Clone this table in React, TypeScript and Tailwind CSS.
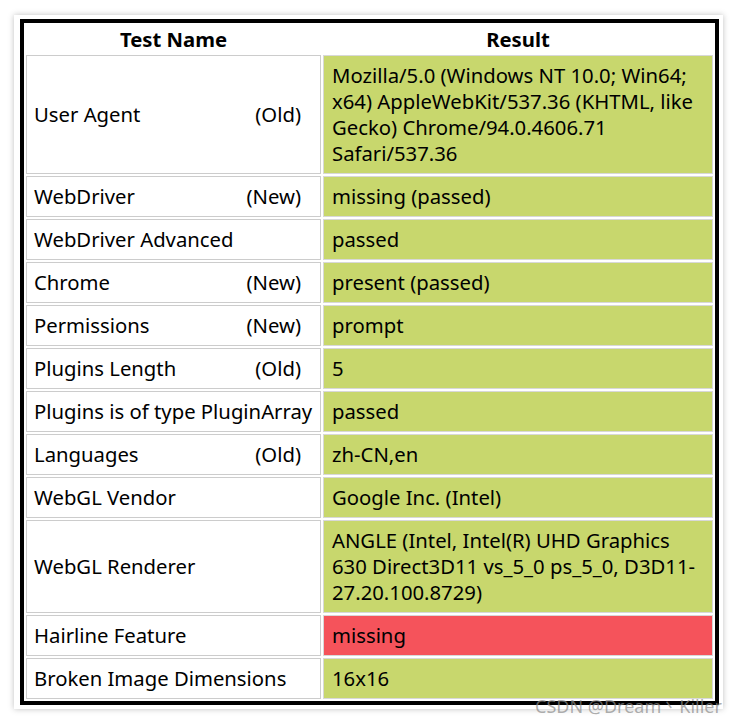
import React from "react";

type Row = { label: string; tag?: string; value: React.ReactNode; bad?: boolean };

const rows: Row[] = [
  {
    label: "User Agent",
    tag: "(Old)",
    value: (
      <>
        Mozilla/5.0 (Windows NT 10.0; Win64;
        <br />
        x64) AppleWebKit/537.36 (KHTML, like
        <br />
        Gecko) Chrome/94.0.4606.71
        <br />
        Safari/537.36
      </>
    ),
  },
  { label: "WebDriver", tag: "(New)", value: "missing (passed)" },
  { label: "WebDriver Advanced", value: "passed" },
  { label: "Chrome", tag: "(New)", value: "present (passed)" },
  { label: "Permissions", tag: "(New)", value: "prompt" },
  { label: "Plugins Length", tag: "(Old)", value: "5" },
  { label: "Plugins is of type PluginArray", value: "passed" },
  { label: "Languages", tag: "(Old)", value: "zh-CN,en" },
  { label: "WebGL Vendor", value: "Google Inc. (Intel)" },
  {
    label: "WebGL Renderer",
    value: (
      <>
        ANGLE (Intel, Intel(R) UHD Graphics
        <br />
        630 Direct3D11 vs_5_0 ps_5_0, D3D11-
        <br />
        27.20.100.8729)
      </>
    ),
  },
  { label: "Hairline Feature", value: "missing", bad: true },
  { label: "Broken Image Dimensions", value: "16x16" },
];

export default function App() {
  return (
    <div
      className="relative w-[738px] h-[724px] bg-white pl-[14px] pt-[15px]"
      style={{ fontFamily: '"Noto Sans", "Open Sans", sans-serif' }}
    >
      <div className="w-[709px] h-[694px] bg-white shadow-[0_0_6px_rgba(0,0,0,0.25)] pl-[6px] pt-[4px]">
        <table className="table-fixed w-[699px] border-separate border-spacing-[2px] border-[4px] border-black text-[20.3px] leading-[26px] text-black">
          <colgroup>
            <col className="w-[295px]" />
            <col className="w-[390px]" />
          </colgroup>
          <thead>
            <tr>
              <th className="h-[28px] p-0 font-bold text-center">Test Name</th>
              <th className="h-[28px] p-0 font-bold text-center">Result</th>
            </tr>
          </thead>
          <tbody>
            {rows.map((r) => (
              <tr key={r.label}>
                <td className="border border-[#cccccc] pl-[7px] pr-[4px] pt-[6px] pb-[7px] align-middle whitespace-nowrap">
                  <div className="flex justify-between">
                    <span>{r.label}</span>
                    {r.tag && <span className="mr-[15px]">{r.tag}</span>}
                  </div>
                </td>
                <td
                  className={
                    r.bad
                      ? "border border-[#d8d8d8] bg-[#f5535b] pl-[8px] pr-[4px] pt-[6px] pb-[7px] align-middle whitespace-nowrap"
                      : "border border-[#d8d8d8] bg-[#c8d76d] pl-[8px] pr-[4px] pt-[6px] pb-[7px] align-middle whitespace-nowrap"
                  }
                >
                  {r.value}
                </td>
              </tr>
            ))}
          </tbody>
        </table>
      </div>
      <div className="absolute left-[535px] top-[694px] text-[18px] leading-[24px] text-[#8a8a8a]/70 whitespace-nowrap">
        CSDN @Dream丶Killer
      </div>
    </div>
  );
}
